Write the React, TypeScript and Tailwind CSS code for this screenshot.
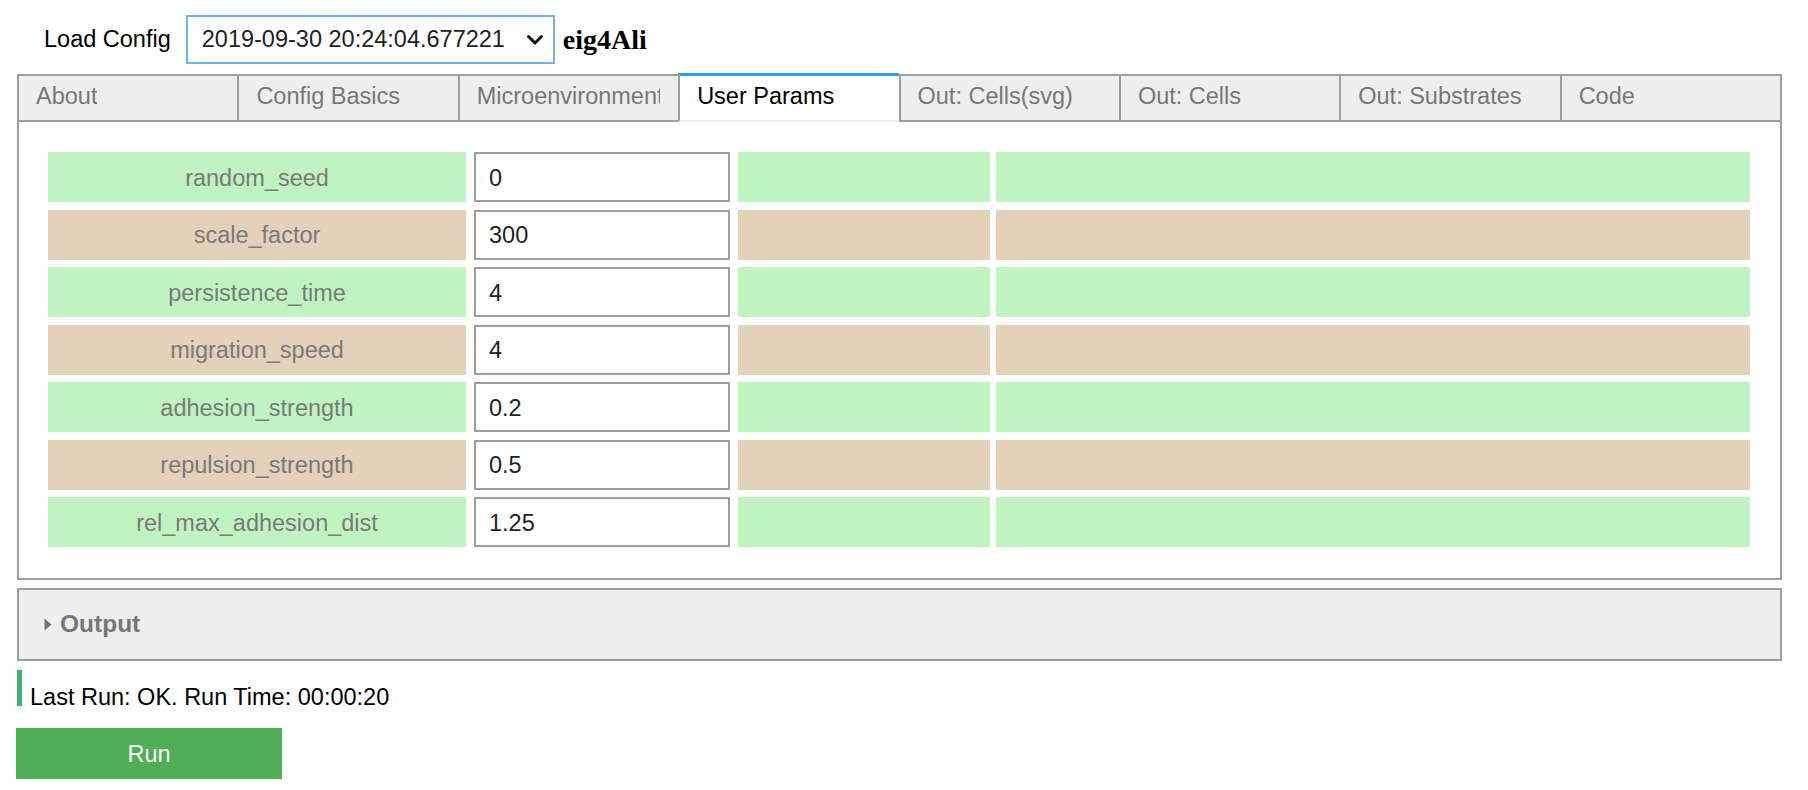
import React from "react";

const tabs = [
  "About",
  "Config Basics",
  "Microenvironment",
  "User Params",
  "Out: Cells(svg)",
  "Out: Cells",
  "Out: Substrates",
  "Code",
];

const rows: [string, string][] = [
  ["random_seed", "0"],
  ["scale_factor", "300"],
  ["persistence_time", "4"],
  ["migration_speed", "4"],
  ["adhesion_strength", "0.2"],
  ["repulsion_strength", "0.5"],
  ["rel_max_adhesion_dist", "1.25"],
];

export default function App() {
  return (
    <div className="w-[1808px] h-[790px] bg-white pl-[17px] pr-[26px] font-['Liberation_Sans',Arial,sans-serif] text-[23.5px] text-[#333]">
      {/* header */}
      <div className="flex items-center pt-[15px] h-[64px]">
        <span className="ml-[27px] text-black">Load Config</span>
        <div className="ml-[15px] w-[369px] h-[49px] border-2 border-[#6db3f2] flex items-center justify-between pl-[14px] pr-[9px] bg-white">
          <span className="text-[#222] whitespace-nowrap">2019-09-30 20:24:04.677221</span>
          <svg width="18" height="12" viewBox="0 0 18 12">
            <path d="M2.5 2.5 L9 9 L15.5 2.5" fill="none" stroke="#111" strokeWidth="3" strokeLinecap="round" strokeLinejoin="round" />
          </svg>
        </div>
        <span className="ml-[8px] font-['Liberation_Serif','Times_New_Roman',serif] font-bold text-[28px] text-black">eig4Ali</span>
      </div>

      {/* tabs */}
      <div className="flex mt-[10px] h-[48px]">
        {tabs.map((t, i) => {
          const active = t === "User Params";
          const last = i === tabs.length - 1;
          return (
            <div
              key={t}
              className={
                "flex-1 min-w-0 flex items-center pb-[2px] pl-[17px] pr-[18px] overflow-hidden whitespace-nowrap border-l-2 border-[#9e9e9e] " +
                (last ? "border-r-2 " : "") +
                (active
                  ? "bg-white text-black border-t-[3px] border-t-[#2f9bef] -mt-px border-b-2 border-b-[#f1f1f1]"
                  : "bg-[#eeeeee] text-[#777] border-t-2 border-b-2")
              }
            >
              <span className="overflow-hidden">{t}</span>
            </div>
          );
        })}
      </div>

      {/* panel */}
      <div className="border-l-2 border-r-2 border-b-2 border-[#9e9e9e] pt-[30px] pb-[31px] pl-[29px] pr-[30px] flex flex-col gap-[7.5px]">
        {rows.map(([label, value], i) => {
          const bg = i % 2 === 0 ? "bg-[#bff4c0]" : "bg-[#e3d1b9]";
          return (
            <div key={label} className="flex h-[50px]">
              <div className={"w-[418px] flex items-center justify-center pt-[3px] text-[#7a7a7a] " + bg}>{label}</div>
              <div className="ml-[8px] w-[256px] border-2 border-[#9e9e9e] bg-white flex items-center pt-[3px] pl-[13px] text-[#222]">
                {value}
              </div>
              <div className={"ml-[8px] w-[252px] " + bg} />
              <div className={"ml-[6px] flex-1 " + bg} />
            </div>
          );
        })}
      </div>

      {/* output */}
      <div className="mt-[8px] h-[73px] bg-[#eeeeee] border-2 border-[#9e9e9e] flex items-center pl-[25px]">
        <svg width="8" height="13" viewBox="0 0 8 13">
          <path d="M0.5 0.5 L7.5 6.5 L0.5 12.5 Z" fill="#777" />
        </svg>
        <span className="ml-[8px] font-bold text-[24.5px] text-[#777]">Output</span>
      </div>

      {/* last run */}
      <div className="mt-[9px] h-[38px] flex items-start">
        <div className="w-[5px] h-[36px] bg-[#3cb371]" />
        <span className="ml-[8px] mt-[15px] leading-[24px] text-black">Last Run: OK. Run Time: 00:00:20</span>
      </div>

      {/* run button */}
      <div className="mt-[20px] -ml-px w-[266px] h-[51px] bg-[#50ae55] flex items-center justify-center pt-[3px] text-white">
        Run
      </div>
    </div>
  );
}
